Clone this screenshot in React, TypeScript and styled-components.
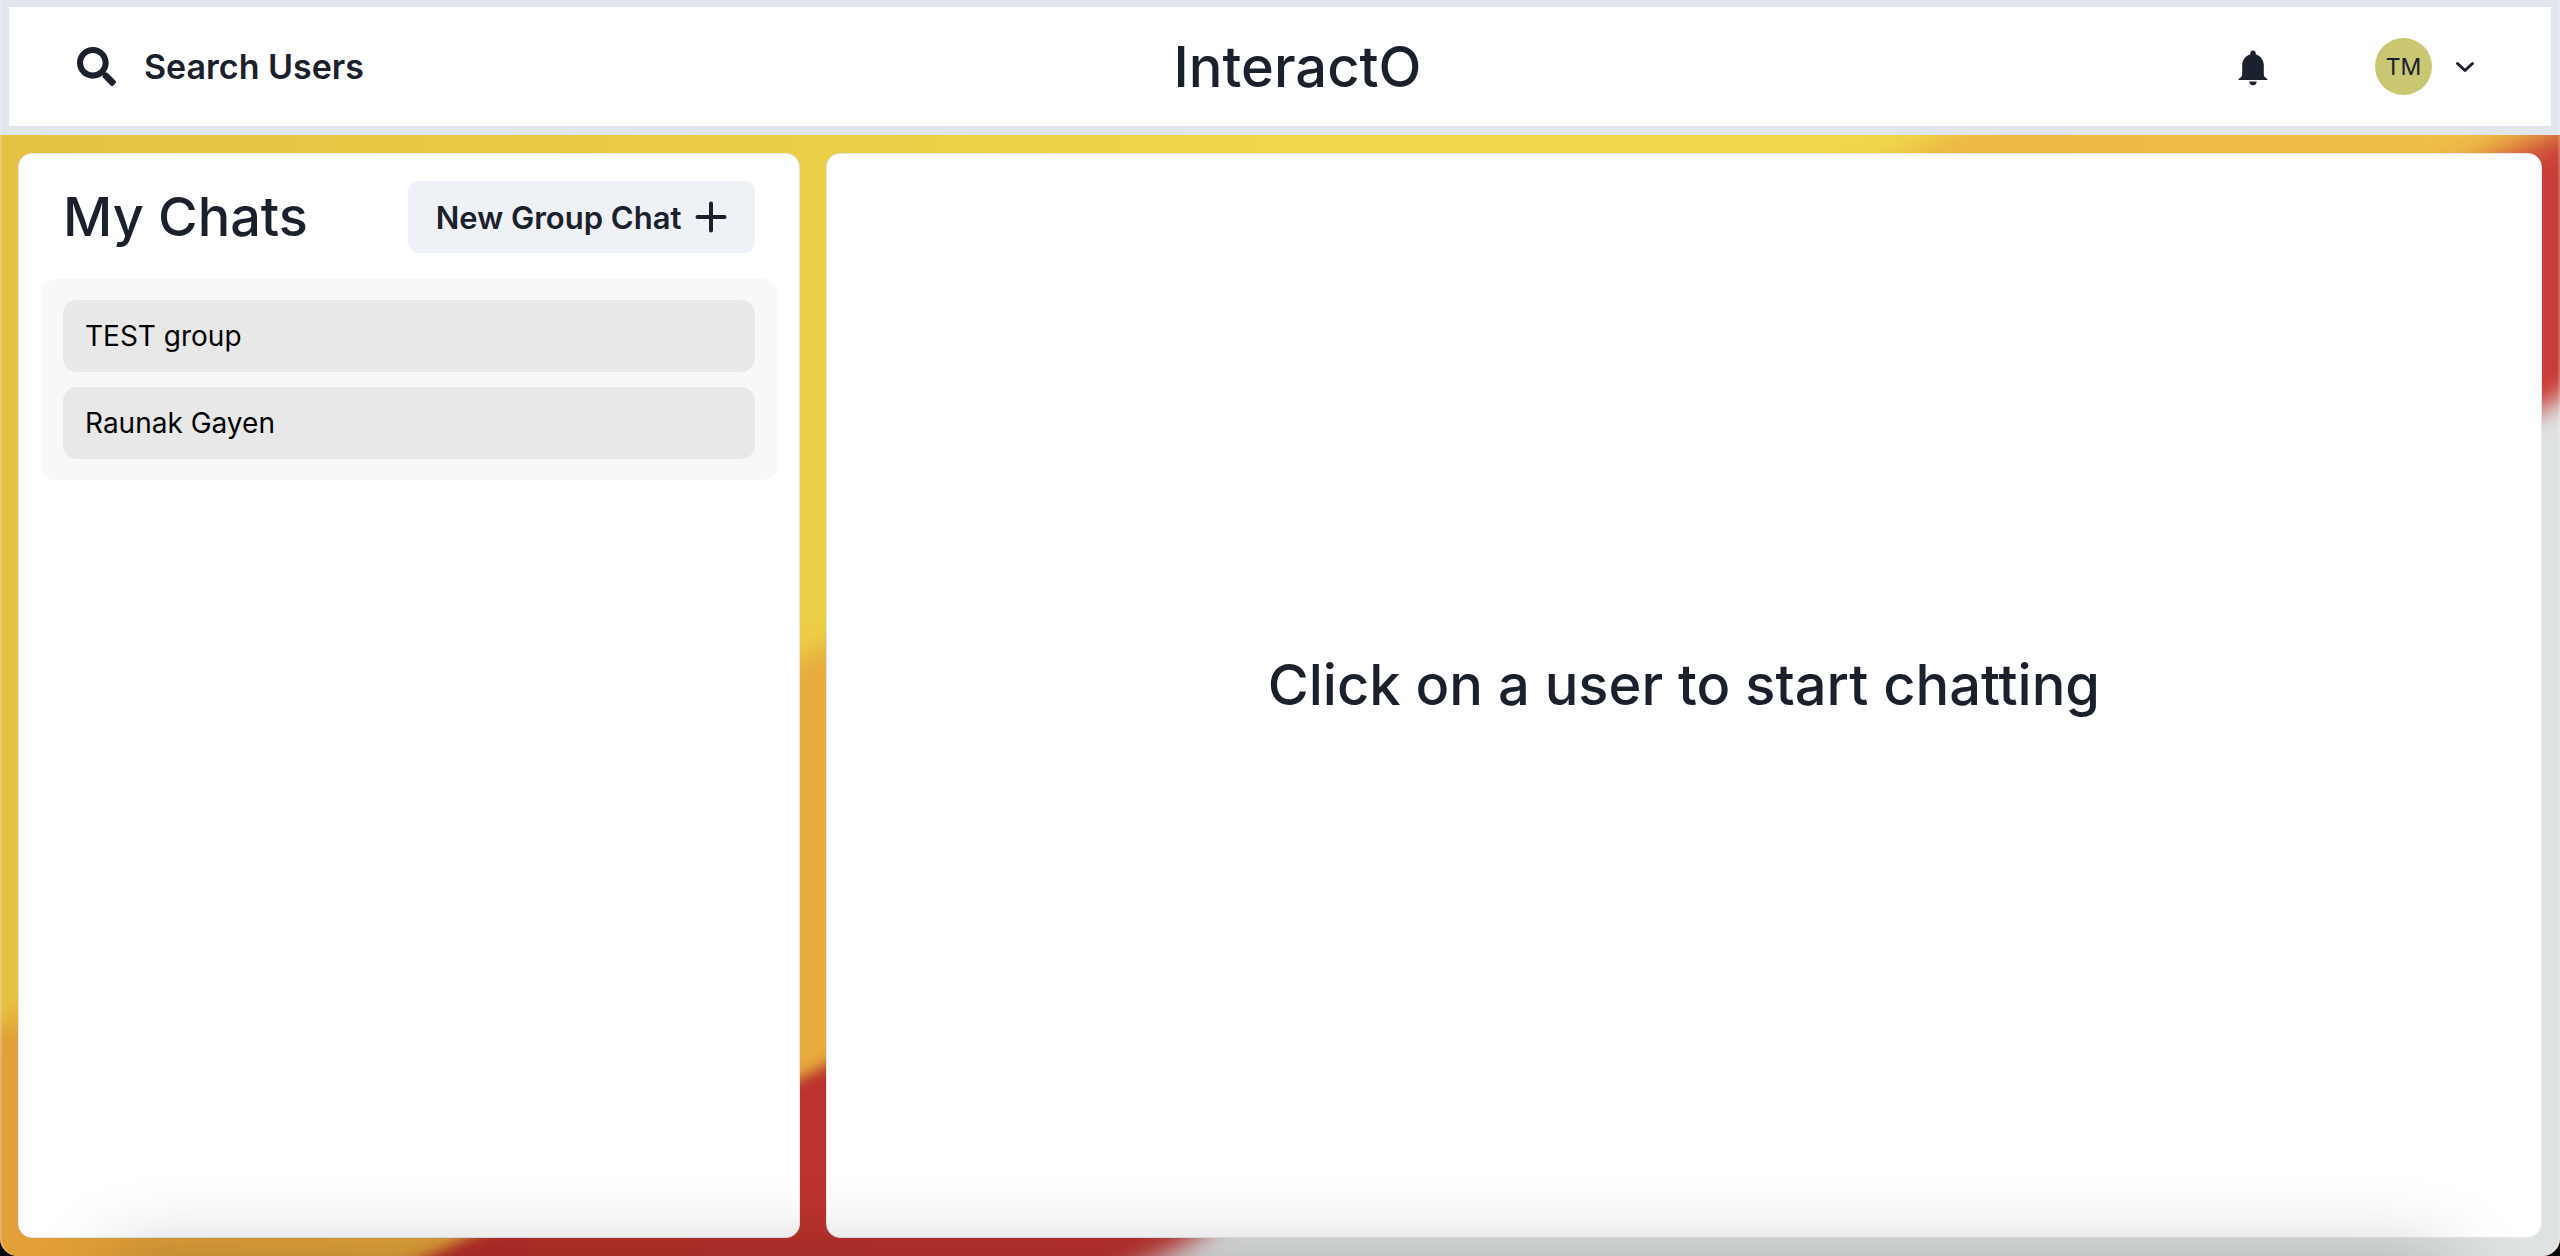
import React from "react";
import styled, { createGlobalStyle } from "styled-components";
import { FaSearch } from "react-icons/fa";

const ink = "#1a202c";
const line = "#e2e7ee";

const GlobalStyle = createGlobalStyle`
  *, *::before, *::after { box-sizing: border-box; }
  body {
    margin: 0;
    background: #000;
    color: ${ink};
    font-family: Inter, "Liberation Sans", sans-serif;
  }
  button { font: inherit; color: inherit; border: 0; cursor: pointer; }
  h1, h2, p, ul { margin: 0; padding: 0; font-weight: inherit; }
`;

const Window = styled.div`
  position: relative;
  isolation: isolate;
  display: flex;
  flex-direction: column;
  min-height: 100vh;
  overflow: hidden;
  border-radius: 0 0 18px 18px;

  &::before {
    content: "";
    position: absolute;
    inset: 0;
    z-index: 2;
    border: solid rgba(255, 255, 255, 0.2);
    border-width: 0 2px;
    border-radius: inherit;
    pointer-events: none;
  }

  &::after {
    content: "";
    position: absolute;
    top: 100%;
    left: 110px;
    right: 110px;
    height: 200px;
    z-index: 1;
    box-shadow: 0 0 80px rgba(0, 0, 0, 0.24);
    pointer-events: none;
  }
`;

const Wallpaper = styled.svg`
  position: absolute;
  inset: 0;
  z-index: -1;
  width: 100%;
  height: 100%;
`;

const Header = styled.header`
  display: flex;
  align-items: center;
  justify-content: space-between;
  height: 135px;
  padding: 0 36px;
  background: #fff;
  border: solid ${line};
  border-width: 7px 9px 9px;
`;

const SearchButton = styled.button`
  display: flex;
  align-items: center;
  gap: 28px;
  height: 72px;
  padding: 0 28px 0 32px;
  background: transparent;
  border-radius: 12px;
  font-size: 34px;
  font-weight: 600;

  svg { width: 39px; height: 39px; }
`;

const Brand = styled.h1`
  font-size: 56px;
  font-weight: 500;
  line-height: 72px;
`;

const Actions = styled.nav`
  display: flex;
  align-items: center;
  gap: 98px;
`;

const IconButton = styled.button`
  display: flex;
  padding: 0 0 0 26px;
  background: transparent;

  svg { width: 48px; height: 48px; }
`;

const ProfileButton = styled.button`
  display: flex;
  align-items: center;
  gap: 16px;
  padding: 0 33px 0 0;
  background: transparent;

  svg { width: 34px; height: 34px; }
`;

const Avatar = styled.span`
  display: grid;
  place-items: center;
  width: 57px;
  height: 57px;
  border-radius: 50%;
  background: #c9c772;
  font-size: 23px;
`;

const Main = styled.main`
  display: flex;
  flex: 1;
  justify-content: space-between;
  padding: 18px;
`;

const Panel = styled.section`
  display: flex;
  flex-direction: column;
  background: #fff;
  border: 1px solid ${line};
  border-radius: 14px;
`;

const ChatsPanel = styled(Panel)`
  width: 31%;
  gap: 26px;
  padding: 27px 22px;
`;

const ConversationPanel = styled(Panel)`
  width: 68%;
  align-items: center;
  justify-content: center;
  padding-bottom: 22px;
`;

const PanelHead = styled.div`
  display: flex;
  align-items: center;
  justify-content: space-between;
  padding: 0 22px;
`;

const PanelTitle = styled.h2`
  font-size: 54px;
  font-weight: 500;
  line-height: 72px;
`;

const NewGroupButton = styled.button`
  display: flex;
  align-items: center;
  gap: 14px;
  height: 72px;
  padding: 0 28px;
  background: #eef1f6;
  border-radius: 11px;
  font-size: 31px;
  font-weight: 600;
  white-space: nowrap;

  svg { width: 32px; height: 32px; }
`;

const ChatList = styled.ul`
  display: flex;
  flex-direction: column;
  gap: 15px;
  padding: 21px 22px;
  background: #f8f8f8;
  border-radius: 14px;
  list-style: none;
`;

const ChatItem = styled.button`
  display: block;
  width: 100%;
  height: 72px;
  padding: 0 22px;
  background: #e8e8e8;
  border-radius: 14px;
  color: #000;
  font-size: 28px;
  text-align: left;
`;

const Placeholder = styled.p`
  font-size: 56px;
  font-weight: 500;
  line-height: 80px;
`;

const BellIcon = () => (
  <svg viewBox="0 0 48 48" fill="currentColor" aria-hidden="true">
    <path d="M24 7.500c1.600 0 2.700 1 2.700 2.600v1.300c4.900 1.300 8.100 5.500 8.100 10.800v8c0 3.300.9 3.900 2.300 4.700 1 .6 1.400 1 1.400 2.100H9.500c0-1.100.4-1.500 1.400-2.100 1.400-.8 2.300-1.400 2.300-4.700v-8c0-5.300 3.200-9.500 8.100-10.800v-1.300c0-1.600 1.100-2.600 2.700-2.600z" />
    <path d="M20.300 38.500h7.400a3.700 3.700 0 0 1-7.400 0z" />
  </svg>
);

const ChevronIcon = () => (
  <svg viewBox="0 0 34 34" fill="none" stroke="currentColor" strokeWidth="3" strokeLinecap="round" strokeLinejoin="round" aria-hidden="true">
    <path d="M9.500 13.500 17 20.500 24.500 13.500" />
  </svg>
);

const PlusIcon = () => (
  <svg viewBox="0 0 32 32" fill="none" stroke="currentColor" strokeWidth="4" strokeLinecap="round" aria-hidden="true">
    <path d="M16 2.500v27M2.500 16h27" />
  </svg>
);

const chats = ["TEST group", "Raunak Gayen"];

export default function App() {
  return (
    <Window>
      <GlobalStyle />
      <Wallpaper viewBox="0 0 2560 1256" preserveAspectRatio="none" aria-hidden="true">
        <defs>
          <linearGradient id="yellow" x1="0" x2="1">
            <stop offset="0" stopColor="#e5c143" />
            <stop offset="0.5" stopColor="#efd64a" />
            <stop offset="1" stopColor="#efd64a" />
          </linearGradient>
          <linearGradient id="orange" x1="0" x2="1">
            <stop offset="0" stopColor="#e29e38" />
            <stop offset="0.32" stopColor="#e7ab3e" />
            <stop offset="1" stopColor="#f0c048" />
          </linearGradient>
          <linearGradient id="red" x1="0" x2="1">
            <stop offset="0" stopColor="#b82e2a" />
            <stop offset="1" stopColor="#c93c38" />
          </linearGradient>
          <filter id="soft" x="-10%" y="-10%" width="120%" height="120%">
            <feGaussianBlur stdDeviation="7" />
          </filter>
          <filter id="softer" x="-10%" y="-10%" width="120%" height="120%">
            <feGaussianBlur stdDeviation="12" />
          </filter>
          <filter id="softest" x="-50%" y="-50%" width="200%" height="200%">
            <feGaussianBlur stdDeviation="16" />
          </filter>
        </defs>
        <rect width="2560" height="1256" fill="url(#yellow)" />
        <path d="M-60 1052 0 1026 813 652 1900 155 2100 60H2640V1340H-60z" fill="url(#orange)" filter="url(#softer)" />
        <path d="M310 1310 448 1247 813 1072 2460 220H2640V1340H310z" fill="url(#red)" filter="url(#soft)" />
        <path d="M2400 200 2500 156 2660 86V420H2400z" fill="#c93c38" filter="url(#softest)" />
        <path d="M1040 1310 1180 1247 2540 410 2640 350V1340H1040z" fill="#dfe2e3" filter="url(#softer)" />
      </Wallpaper>

      <Header>
        <SearchButton type="button">
          <FaSearch aria-hidden="true" />
          Search Users
        </SearchButton>
        <Brand>InteractO</Brand>
        <Actions aria-label="Account">
          <IconButton type="button" aria-label="Notifications">
            <BellIcon />
          </IconButton>
          <ProfileButton type="button" aria-label="Profile menu">
            <Avatar>TM</Avatar>
            <ChevronIcon />
          </ProfileButton>
        </Actions>
      </Header>

      <Main>
        <ChatsPanel>
          <PanelHead>
            <PanelTitle>My Chats</PanelTitle>
            <NewGroupButton type="button">
              New Group Chat
              <PlusIcon />
            </NewGroupButton>
          </PanelHead>
          <ChatList>
            {chats.map((name) => (
              <li key={name}>
                <ChatItem type="button">{name}</ChatItem>
              </li>
            ))}
          </ChatList>
        </ChatsPanel>
        <ConversationPanel>
          <Placeholder>Click on a user to start chatting</Placeholder>
        </ConversationPanel>
      </Main>
    </Window>
  );
}
